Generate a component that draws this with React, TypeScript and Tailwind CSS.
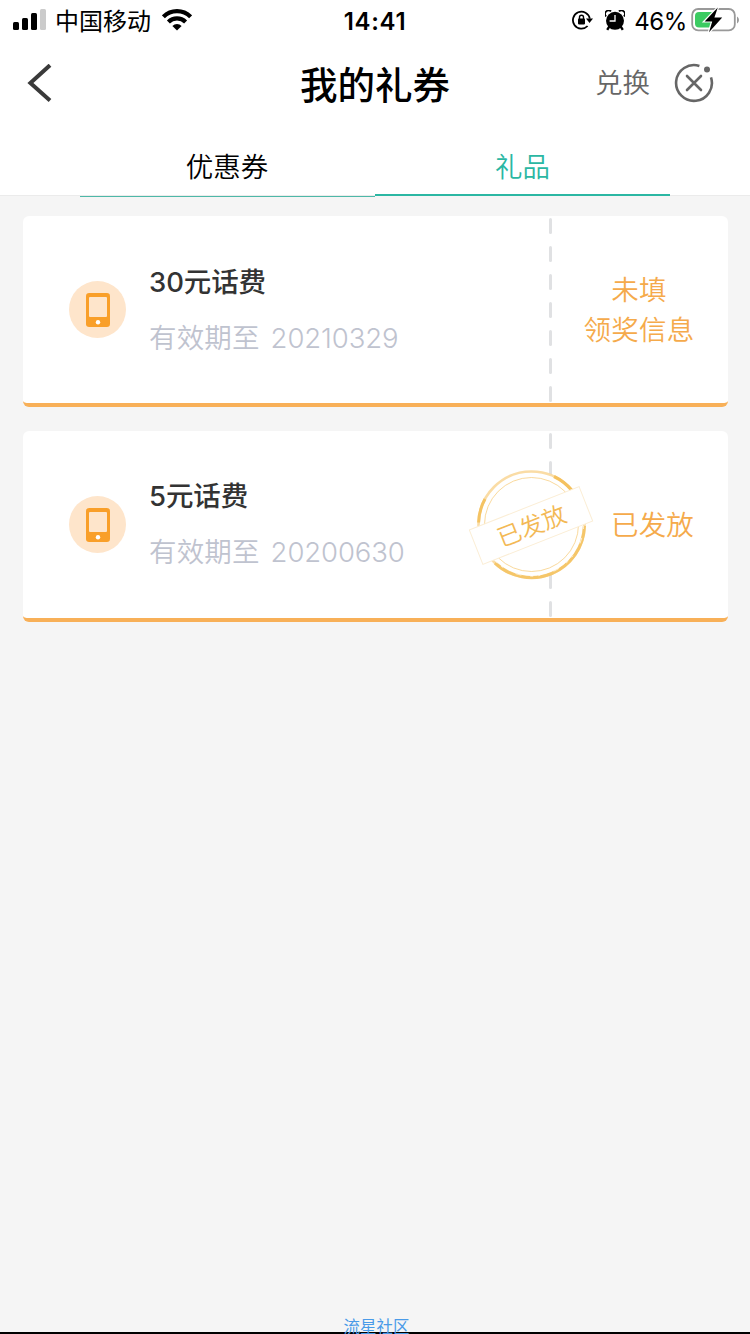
import React from 'react';

interface Gift {
    title: string;
    expires: string;
    status: string[];
    issued?: boolean;
}

const GIFTS: Gift[] = [
    { title: '30元话费', expires: '20210329', status: ['未填', '领奖信息'] },
    { title: '5元话费', expires: '20200630', status: ['已发放'], issued: true },
];

const SignalIcon = () => (
    <svg width="33" height="22" viewBox="0 0 33 22">
        <rect x="0" y="13" width="6" height="8" rx="1.5" />
        <rect x="9" y="9" width="6" height="12" rx="1.5" />
        <rect x="18" y="4" width="6" height="17" rx="1.5" />
        <rect x="27" y="0" width="6" height="21" rx="1.5" fill="#cbcbcb" />
    </svg>
);

const WifiIcon = () => (
    <svg width="30" height="22" viewBox="0 0 30 22" fill="none" stroke="#000" strokeWidth="4.2">
        <path d="M1.4 7.8a19.2 19.2 0 0 1 27.2 0" />
        <path d="M6.4 13a12.2 12.2 0 0 1 17.2 0" />
        <path d="M15 21.6l-4.6-4.6a6.5 6.5 0 0 1 9.2 0z" fill="#000" stroke="none" />
    </svg>
);

const RotationLockIcon = () => (
    <svg width="21" height="20" viewBox="0 0 21 20" fill="none" stroke="#000">
        <path d="M15.6 16A8.5 8.5 0 1 1 17.8 8.6" strokeWidth="1.8" />
        <path d="M14 8.6h7L17.5 13z" fill="#000" stroke="none" />
        <rect x="6" y="8.6" width="7" height="5.8" rx="0.8" fill="#000" stroke="none" />
        <path d="M7.5 9V7.2a2 2 0 0 1 4 0V9" strokeWidth="1.4" />
    </svg>
);

const AlarmIcon = () => (
    <svg width="20" height="21" viewBox="0 0 20 21">
        <path d="M1.2 6.4A3.4 3.4 0 0 1 6 1.4" fill="none" stroke="#000" strokeWidth="1.8" />
        <path d="M18.8 6.4A3.4 3.4 0 0 0 14 1.4" fill="none" stroke="#000" strokeWidth="1.8" />
        <circle cx="10" cy="10.8" r="9" />
        <path d="M4.4 16.4L2.2 19.8M15.6 16.4l2.2 3.4" stroke="#000" strokeWidth="2.4" />
        <path d="M10 5v6H4.6" fill="none" stroke="#fff" strokeWidth="1.3" />
    </svg>
);

const BatteryIcon = () => (
    <svg width="49" height="26" viewBox="0 0 49 26">
        <rect x="1.2" y="2" width="42.6" height="21.4" rx="6" fill="none" stroke="#999" strokeWidth="1.8" />
        <path d="M8 5h13v15.4H8a4 4 0 0 1-4-4V9a4 4 0 0 1 4-4z" fill="#3ccb62" />
        <path d="M46 9.4c2.6 1.4 2.6 5.6 0 7z" fill="#999" />
        <path d="M26.8 0.6L13.6 14.4h7.6L18 25.2 31.2 10.6h-7.8z" stroke="#fff" strokeWidth="2.4" paintOrder="stroke" />
    </svg>
);

const BackIcon = () => (
    <svg width="28" height="38" viewBox="0 0 28 38" fill="none" stroke="#3a3a3a" strokeWidth="4">
        <path d="M26 1.2L6.4 19 26 36.4" />
    </svg>
);

const CloseIcon = () => (
    <svg width="40" height="40" viewBox="0 0 40 40" fill="none" stroke="#666" strokeWidth="2.6">
        <path d="M25.4 2.9A17.9 17.9 0 1 0 37 14.4" />
        <path d="M13 13l14 14M27 13L13 27" strokeLinecap="round" />
        <circle cx="33" cy="6.6" r="3" fill="#666" stroke="none" />
    </svg>
);

const PhoneIcon = () => (
    <svg width="57" height="57" viewBox="0 0 57 57">
        <circle cx="28.5" cy="28.5" r="28.5" fill="#fee5cb" />
        <rect x="17" y="12" width="24" height="34" rx="3.2" fill="#f99f29" />
        <rect x="20" y="16" width="18" height="20" rx="1" fill="#fee5cb" />
        <circle cx="29" cy="41.2" r="2.2" fill="#fff" />
    </svg>
);

const Stamp = () => (
    <svg width="126" height="112" viewBox="0 0 126 112" className="absolute left-[446px] top-[37px]">
        <circle cx="62.5" cy="56.5" r="54" fill="#fff" />
        <g fill="none" stroke="#f6c569">
            <circle cx="62.5" cy="56.5" r="53" strokeWidth="2.6" opacity="0.6" />
            {/* worn ink, heavier on the left, upper right and lower right */}
            <path d="M9.6 54.5A53 53 0 0 1 16 31" strokeWidth="3" stroke="#f4c363" />
            <path d="M85 8.5A53 53 0 0 1 103 22.5" strokeWidth="3.2" stroke="#f4c15e" />
            <path d="M115.4 58A53 53 0 0 1 26 95" strokeWidth="3.2" stroke="#f4c363" opacity="0.9" />
            <path
                d="M114.6 58A52 52 0 0 1 27 94"
                strokeWidth="0.9"
                stroke="#fff"
                strokeDasharray="3 9 6 14 2 5"
                opacity="0.8"
            />
            <circle cx="62.5" cy="56.5" r="47" strokeWidth="1" opacity="0.65" />
        </g>
        <g transform="rotate(-21.5 62 57.5)">
            <rect x="3" y="39" width="118" height="37" fill="#fff" stroke="#fbeed6" />
            <text
                x="62.5"
                y="67"
                textAnchor="middle"
                fontSize="24"
                fill="#f3b955"
                className="font-['Noto_Sans_CJK_SC',sans-serif] font-[350]"
            >
                已发放
            </text>
        </g>
    </svg>
);

const StatusBar = () => (
    <div className="grid h-10 grid-cols-[1fr_auto_1fr] items-center pl-[13px] pr-[10px] text-2xl leading-none">
        <div className="flex items-center">
            <SignalIcon />
            <span className="ml-[9px] mr-[11px] pt-[3px]">中国移动</span>
            <WifiIcon />
        </div>
        <span className="mr-[3px] pt-[3px] text-2xl font-semibold leading-none tracking-[0.7px]">14:41</span>
        <div className="flex items-center justify-end">
            <RotationLockIcon />
            <span className="ml-3 mr-[9px]">
                <AlarmIcon />
            </span>
            <span className="mr-1 pt-[3px] tracking-[-0.4px]">46%</span>
            <BatteryIcon />
        </div>
    </div>
);

const GiftCard: React.FC<{ gift: Gift }> = ({ gift }) => (
    <div className="relative flex h-[191px] rounded-md border-b-4 border-[#f8b058] bg-white">
        <div className="flex w-[526px] pl-[46px]">
            <div className="pt-[65px]">
                <PhoneIcon />
            </div>
            <div className={`ml-[23px] ${gift.issued ? 'pt-[45px]' : 'pt-[46px]'}`}>
                <h2 className="text-[27.5px] font-medium leading-10 tracking-[-0.1px] text-[#333]">{gift.title}</h2>
                <p className="mt-4 flex gap-[11px] text-[27.5px] font-[350] leading-10 text-[#bfc3cf]">
                    <span className="tracking-[0.15px]">有效期至</span>
                    <span className="tracking-[-0.1px]">{gift.expires}</span>
                </p>
            </div>
        </div>
        <div className="flex w-[3px] flex-col gap-3 pt-0.5">
            {Array.from({ length: 7 }, (_, i) => (
                <span key={i} className="h-4 w-[3px] rounded-sm bg-[#e0e1e3]" />
            ))}
        </div>
        <div
            className={`flex flex-1 flex-col items-center justify-center text-[27.5px] font-[350] leading-10 tracking-[0.2px] text-[#f5aa4b] ${
                gift.issued ? 'pl-[25px]' : 'pr-[2px]'
            }`}
        >
            {gift.status.map((line) => (
                <span key={line}>{line}</span>
            ))}
        </div>
        {gift.issued && <Stamp />}
    </div>
);

const App: React.FC = () => {
    return (
        <div className="flex h-[1334px] w-[750px] flex-col bg-[#f5f5f5] font-['Inter','Noto_Sans_CJK_SC',sans-serif] text-black">
            <header className="h-[196px] border-b border-[#ebebeb] bg-white">
                <StatusBar />
                <div className="grid h-[86px] grid-cols-[1fr_auto_1fr] items-center pl-6 pr-9">
                    <BackIcon />
                    <h1 className="ml-3 pt-1.5 text-[37.5px] font-medium leading-none">我的礼券</h1>
                    <div className="flex items-center justify-end gap-6 text-[27.5px] leading-none text-[#666]">
                        <span className="pt-0.5 font-[350]">兑换</span>
                        <CloseIcon />
                    </div>
                </div>
                <nav className="mx-20 grid h-[71px] grid-cols-2 text-center text-[27.5px] font-[350] leading-[82px]">
                    <a className="h-[71px] border-b border-[#4db8a8] pr-px">优惠券</a>
                    <a className="h-[70px] border-b-2 border-[#2bb7a3] text-[#2bb7a3]">礼品</a>
                </nav>
            </header>
            <main className="flex flex-col gap-6 pl-[23px] pr-[22px] pt-5">
                {GIFTS.map((gift) => (
                    <GiftCard key={gift.title} gift={gift} />
                ))}
            </main>
            <footer className="mt-auto h-4 pl-[3px] text-center text-[16.5px] leading-[18px] text-[#4a9be8] shadow-[inset_0_-2px_0_#000]">
                流星社区
            </footer>
        </div>
    );
};

export default App;
